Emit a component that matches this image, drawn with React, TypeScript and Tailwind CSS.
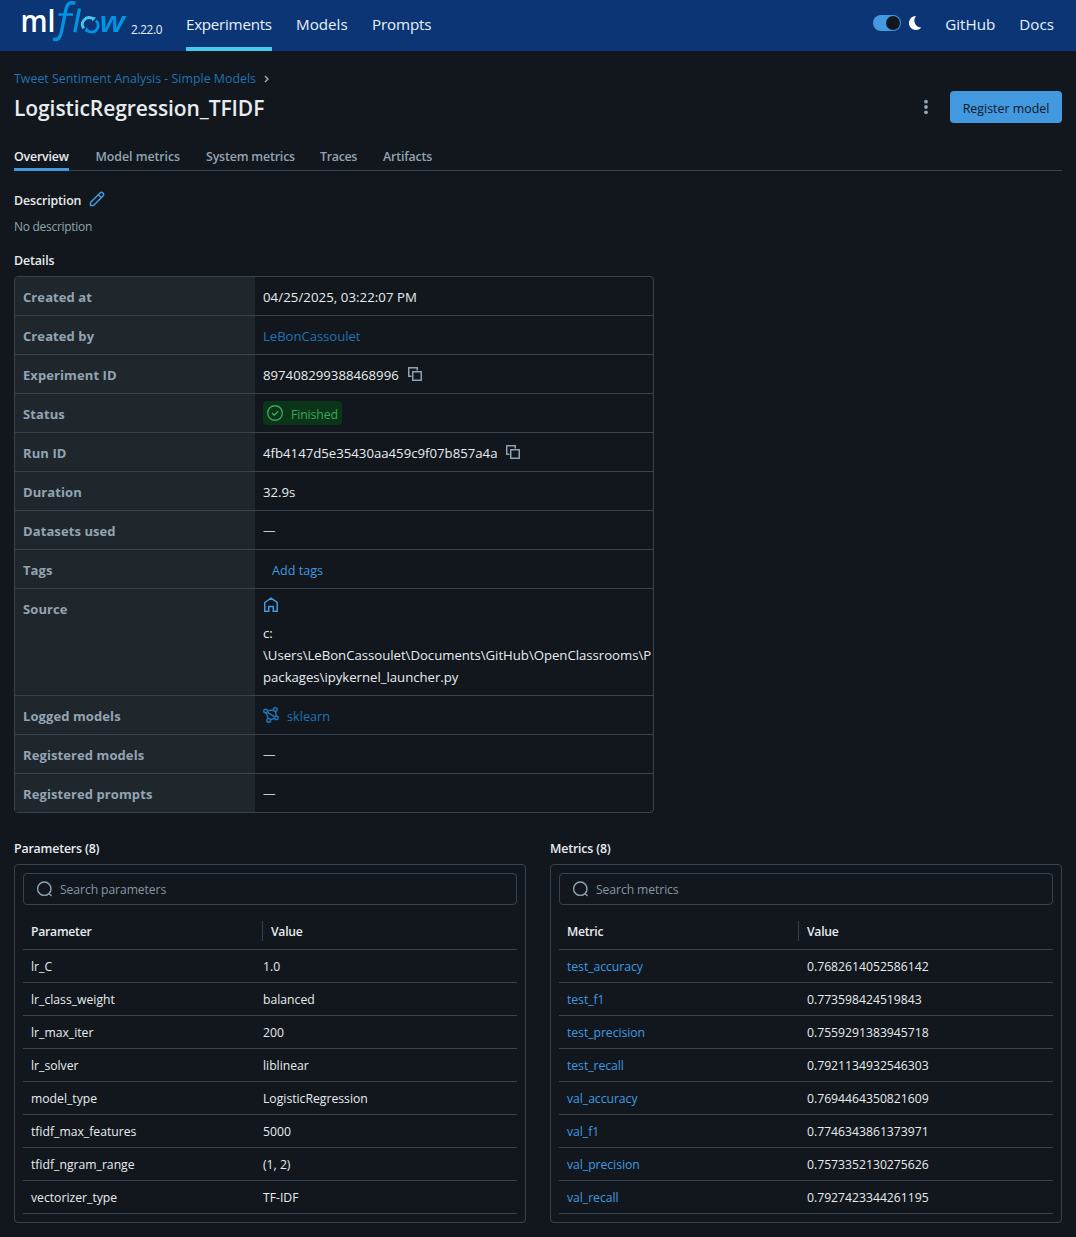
import React from "react";

const F = "font-['Open_Sans','Noto_Sans',sans-serif]";

function Logo() {
  return (
    <svg width="108" height="44" viewBox="0 0 108 44" className="block shrink-0">
      <text x="0.500" y="32.300" fill="#fff" fontFamily="Open Sans" fontWeight="600" fontSize="30" textLength="35" lengthAdjust="spacingAndGlyphs">ml</text>
      <g fill="none" stroke="#0194e2" strokeLinecap="butt">
        <path d="M55.300 3.400C50.500 1.800 47.200 3.200 46 9L41.300 32.500C40.200 38 37.800 40.500 33 39.200" strokeWidth="3.400" />
        <path d="M38.500 14.500H53" strokeWidth="2.600" />
        <path d="M59.500 8.500L54.800 32.300" strokeWidth="3.300" />
        <path d="M63.800 28.300A6.600 6.600 0 0 1 72 18.400" stroke="#43c9ed" strokeWidth="2.800" />
        <path d="M76 20.500A6.600 6.600 0 0 1 67 30.400" strokeWidth="2.800" />
      </g>
      <path d="M71 16.500L76 17.500L72.500 21.500Z" fill="#43c9ed" />
      <path d="M64.800 31.800L66.500 27L69.500 31.500Z" fill="#0194e2" />
      <text x="79.500" y="32.300" fill="#0194e2" fontFamily="Open Sans" fontStyle="italic" fontWeight="600" fontSize="29" textLength="25.500" lengthAdjust="spacingAndGlyphs">w</text>
    </svg>
  );
}

function CopyIcon() {
  return (
    <svg width="16" height="16" viewBox="0 0 16 16" fill="none" stroke="#8fa0ae" strokeWidth="1.5" className="block">
      <path d="M4.500 10.250H1.750V1.750H10.250V4.500" />
      <path d="M5.750 5.750H14.250V14.250H5.750Z" />
    </svg>
  );
}

function SearchIcon() {
  return (
    <svg width="16" height="16" viewBox="0 0 16 16" fill="none" stroke="#92a4b3" strokeWidth="1.400" className="block">
      <circle cx="8.300" cy="7.700" r="6.700" />
      <path d="M12.900 12.300L15.600 15" />
    </svg>
  );
}

function ModelsIcon() {
  return (
    <svg width="16" height="16" viewBox="0 0 16 16" fill="none" stroke="#2272b4" strokeWidth="1.500" className="block">
      <circle cx="2.600" cy="4" r="1.800" />
      <circle cx="12.300" cy="2.600" r="1.800" />
      <circle cx="13.400" cy="10.800" r="1.800" />
      <circle cx="5.700" cy="13.400" r="1.800" />
      <path d="M4.400 3.800L10.500 2.900M12.500 4.400L13.200 9M11.700 11.400L7.400 12.800M3.100 5.800L5.200 11.600M4.100 5.100L11.900 9.800" />
    </svg>
  );
}

function Row({ label, children, tall }: { label: string; children: React.ReactNode; tall?: boolean }) {
  return (
    <div className={"flex border-b border-[#37444f] last:border-b-0 " + (tall ? "h-[107px]" : "h-[39px] last:h-[38px]")}>
      <div className="w-60 shrink-0 bg-[#1f272d] px-2 pt-[10px] text-[13px] leading-5 font-bold tracking-[0.007em] text-[#92a4b3]">{label}</div>
      <div className={"min-w-0 flex-1 overflow-hidden pl-2 text-[13.2px] " + (tall ? "" : "flex items-center pt-px")}>{children}</div>
    </div>
  );
}

function Table({ title, head, search, rows, link }: { title: string; head: string; search: string; rows: string[][]; link?: boolean }) {
  return (
    <section className="text-[12.2px]">
      <h2 className="h-[21px] pt-px text-[12.4px] leading-5 font-semibold tracking-[-0.015em]">{title}</h2>
      <div className="mt-[5px] h-[359px] rounded-sm border border-[#37444f] p-2">
        <div className="flex h-8 items-center rounded-sm border border-[#37444f] pl-3 text-[#8696a3]">
          <SearchIcon />
          <span className="ml-2 pt-px tracking-[-0.008em]">{search}</span>
        </div>
        <div className="flex h-[45px] items-center border-b border-[#37444f] pt-2 font-semibold tracking-[-0.02em]">
          <div className="w-[239px] pt-px pl-2">{head}</div>
          <div className="h-5 border-l border-[#37444f] pl-2 leading-[21px]">Value</div>
        </div>
        {rows.map(([k, v]) => (
          <div key={k} className="flex h-[33px] items-center border-b border-[#37444f] pt-[2px]">
            <div className={link ? "w-[248px] pl-2 tracking-[-0.003em] text-[#4299e0]" : "w-60 pl-2"}>{k}</div>
            <div>{v}</div>
          </div>
        ))}
      </div>
    </section>
  );
}

const params = [
  ["lr_C", "1.0"],
  ["lr_class_weight", "balanced"],
  ["lr_max_iter", "200"],
  ["lr_solver", "liblinear"],
  ["model_type", "LogisticRegression"],
  ["tfidf_max_features", "5000"],
  ["tfidf_ngram_range", "(1, 2)"],
  ["vectorizer_type", "TF-IDF"],
];

const metrics = [
  ["test_accuracy", "0.7682614052586142"],
  ["test_f1", "0.773598424519843"],
  ["test_precision", "0.7559291383945718"],
  ["test_recall", "0.7921134932546303"],
  ["val_accuracy", "0.7694464350821609"],
  ["val_f1", "0.7746343861373971"],
  ["val_precision", "0.7573352130275626"],
  ["val_recall", "0.7927423344261195"],
];

export default function App() {
  return (
    <div className={"h-[1237px] w-[1076px] overflow-hidden bg-[#11171c] text-[12.4px] leading-5 text-[#e8ecf0] " + F}>
      <header className="flex h-[51px] bg-[#0b3574] pl-5 pr-[22px] text-[15.2px] text-[#e7f1fb]">
        <Logo />
        <span className="ml-[3px] mt-[19px] w-[55px] shrink-0 text-[11.8px] tracking-[-0.03em]">2.22.0</span>
        <nav className="flex gap-6">
          <a className="h-[51px] w-[86px] border-b-4 border-[#43c9ed] pt-[14px] tracking-[-0.018em]">Experiments</a>
          <a className="w-[52px] pt-[14px]">Models</a>
          <a className="pt-[14px] tracking-[-0.01em]">Prompts</a>
        </nav>
        <div className="ml-auto flex">
          <div className="mt-[15px] flex h-4 w-7 items-center justify-end rounded-full bg-[#4299e0] pr-px">
            <div className="size-[14px] rounded-full bg-[#11171c]" />
          </div>
          <svg width="16" height="16" viewBox="0 0 16 16" fill="#fff" className="ml-[7px] mt-[15px]">
            <path d="M8 1A7 7 0 1 0 13.300 12.500A7 7 0 0 1 8 1Z" />
          </svg>
          <a className="ml-[21px] pt-[14px]">GitHub</a>
          <a className="ml-6 pt-[14px]">Docs</a>
        </div>
      </header>
      <main className="px-[14px]">
        <div className="mt-[18px] flex h-[20px] items-center text-[#2272b4]">
          Tweet Sentiment Analysis - Simple Models
          <svg width="6" height="8" viewBox="0 0 6 8" fill="none" stroke="#a9b5c0" strokeWidth="1.300" className="ml-2"><path d="M1 1L4 4L1 7" /></svg>
        </div>
        <div className="mt-[2px] flex h-8 items-center">
          <h1 className="pt-[2px] text-[21px] leading-7 font-semibold tracking-[-0.004em]">LogisticRegression_TFIDF</h1>
          <svg width="16" height="16" viewBox="0 0 16 16" fill="#92a4b3" className="ml-auto"><circle cx="8" cy="2.700" r="1.900" /><circle cx="8" cy="8" r="1.900" /><circle cx="8" cy="13.300" r="1.900" /></svg>
          <button className="ml-4 h-8 w-28 rounded-sm bg-[#4299e0] pt-[3px] text-[#11171c]">Register model</button>
        </div>
        <div className="mt-5 flex h-[28px] gap-[26px] border-b border-[#37444f] font-semibold tracking-[-0.015em] text-[#92a4b3]">
          <span className="h-[28px] w-[55px] border-b-3 border-[#4299e0] pt-[4px] text-[#e8ecf0]">Overview</span>
          <span className="w-[85px] pt-1 pl-[0.5px] tracking-[-0.005em] whitespace-nowrap">Model metrics</span>
          <span className="w-[88px] pt-1 tracking-[-0.014em] whitespace-nowrap">System metrics</span>
          <span className="w-[37px] pt-1 tracking-[-0.024em]">Traces</span>
          <span className="pt-1">Artifacts</span>
        </div>
        <div className="mt-5 flex h-5 items-center font-semibold tracking-[-0.01em]">
          Description
          <svg width="16" height="16" viewBox="0 0 16 16" fill="none" stroke="#4299e0" strokeWidth="1.500" strokeLinejoin="round" className="-mt-[4px] ml-2"><path d="M1.500 11.500L11 2A1.950 1.950 0 0 1 14 5L4.500 14.500H1.500ZM9.300 3.700L12.300 6.700" /></svg>
        </div>
        <p className="mt-[6px] text-[12px] leading-5 tracking-[-0.024em] text-[#92a4b3]">No description</p>
        <h2 className="mt-[14px] mb-[5px] font-semibold tracking-[-0.01em]">Details</h2>
        <div className="w-[640px] overflow-hidden rounded-sm border border-[#37444f]">
          <Row label="Created at"><span className="tracking-[0.006em]">04/25/2025, 03:22:07 PM</span></Row>
          <Row label="Created by"><span className="tracking-[-0.006em] text-[#2272b4]">LeBonCassoulet</span></Row>
          <Row label="Experiment ID">897408299388468996<span className="-mt-[2px] ml-2"><CopyIcon /></span></Row>
          <Row label="Status">
            <span className="-mt-px flex h-6 w-[79px] items-center rounded-sm bg-[#0b3518] pl-1 text-[12.3px] text-[#3ba65e]">
              <svg width="16" height="16" viewBox="0 0 16 16" fill="none" stroke="#3ba65e" strokeWidth="1.400"><circle cx="8" cy="8" r="7.300" /><path d="M5 8L7.200 10.200L11.200 6.200" /></svg>
              <span className="ml-2 pt-[3px] tracking-[-0.01em]">Finished</span>
            </span>
          </Row>
          <Row label="Run ID">4fb4147d5e35430aa459c9f07b857a4a<span className="-mt-[2px] ml-2"><CopyIcon /></span></Row>
          <Row label="Duration">32.9s</Row>
          <Row label="Datasets used"><span className="text-[12.4px] text-[#c3cad0]">—</span></Row>
          <Row label="Tags"><span className="ml-[9px] pt-[2px] text-[12.6px] text-[#4299e0]">Add tags</span></Row>
          <Row label="Source" tall>
            <svg width="16" height="16" viewBox="0 0 16 16" fill="none" stroke="#4299e0" strokeWidth="1.500" className="mt-2 mb-[9px]"><path d="M1.750 5.500L8 1.250L14.250 5.500V14.250H10.250V9.500H5.750V14.250H1.750Z" /></svg>
            <p className="leading-[22px] tracking-[-0.002em] whitespace-nowrap">c:<br />\Users\LeBonCassoulet\Documents\GitHub\OpenClassrooms\P<br />packages\ipykernel_launcher.py</p>
          </Row>
          <Row label="Logged models"><span className="-mt-px"><ModelsIcon /></span><span className="ml-2 text-[12.7px] text-[#2272b4]">sklearn</span></Row>
          <Row label="Registered models"><span className="text-[12.4px] text-[#c3cad0]">—</span></Row>
          <Row label="Registered prompts"><span className="text-[12.4px] text-[#c3cad0]">—</span></Row>
        </div>
        <div className="mt-[25px] grid grid-cols-2 gap-6">
          <Table title="Parameters (8)" head="Parameter" search="Search parameters" rows={params} />
          <Table title="Metrics (8)" head="Metric" search="Search metrics" rows={metrics} link />
        </div>
      </main>
    </div>
  );
}
